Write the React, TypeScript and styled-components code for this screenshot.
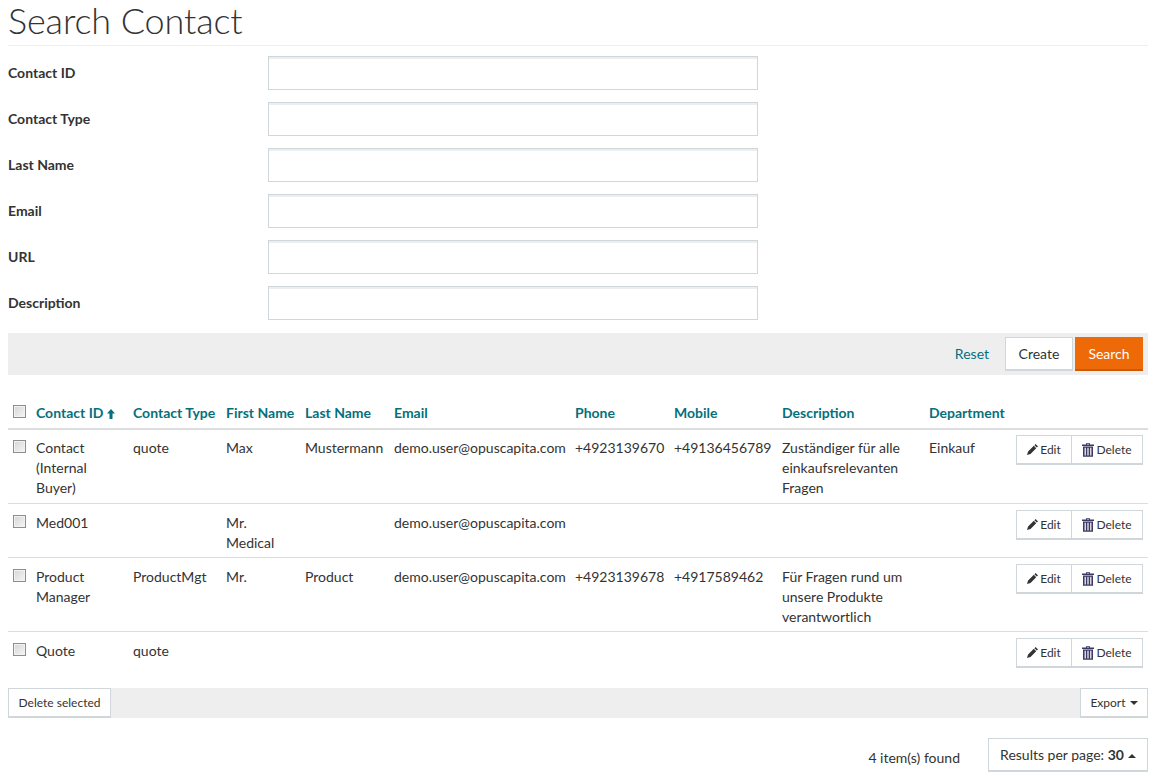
import styled, { createGlobalStyle } from "styled-components";

const GlobalStyle = createGlobalStyle`
  html, body {
    margin: 0;
    padding: 0;
    background: #fff;
  }
  body {
    font-family: "Lato", "Liberation Sans", sans-serif;
    font-size: 14px;
    line-height: 20px;
    color: #333;
  }
`;

const fields = ["Contact ID", "Contact Type", "Last Name", "Email", "URL", "Description"];

const columns = [
  { title: "Contact ID", width: 97 },
  { title: "Contact Type", width: 93 },
  { title: "First Name", width: 79 },
  { title: "Last Name", width: 89 },
  { title: "Email", width: 181 },
  { title: "Phone", width: 99 },
  { title: "Mobile", width: 108 },
  { title: "Description", width: 147 },
  { title: "Department", width: 82 },
];

const rows = [
  ["Contact (Internal Buyer)", "quote", "Max", "Mustermann", "demo.user@opuscapita.com", "+4923139670", "+49136456789", "Zuständiger für alle einkaufsrelevanten Fragen", "Einkauf"],
  ["Med001", "", "Mr. Medical", "", "demo.user@opuscapita.com", "", "", "", ""],
  ["Product Manager", "ProductMgt", "Mr.", "Product", "demo.user@opuscapita.com", "+4923139678", "+4917589462", "Für Fragen rund um unsere Produkte verantwortlich", ""],
  ["Quote", "quote", "", "", "", "", "", "", ""],
];

const PencilIcon = () => (
  <Glyph viewBox="0 0 11 11" width="11" height="11">
    <path d="M8.600 0L11 2.400 9.800 3.600 7.400 1.200zM6.800 1.800l2.400 2.400-5.700 5.700L0 11l1.100-3.500z" fill="#333" />
  </Glyph>
);

const TrashIcon = () => (
  <Glyph viewBox="0 0 12 14" width="12" height="14">
    <path
      d="M4 1.600V.2h4v1.400h4v1.300H0V1.600zM5 .9v.7h2V.900zM1 3.500h10V13.800H1zM2.600 4.800v7.700h1.200V4.800zM5.400 4.800v7.700h1.200V4.800zM8.200 4.800v7.700h1.200V4.800z"
      fill="#3b3a63"
      fillRule="evenodd"
    />
  </Glyph>
);

const SortArrow = () => (
  <Glyph viewBox="0 0 8 10" width="8" height="10">
    <path d="M4 0l4 4.600H5.500V10h-3V4.600H0z" fill="#05707d" />
  </Glyph>
);

export default function App() {
  return (
    <Page>
      <GlobalStyle />
      <Title>Search Contact</Title>
      <Form>
        {fields.map((field) => (
          <FieldRow key={field}>
            <FieldLabel>{field}</FieldLabel>
            <FieldInput type="text" />
          </FieldRow>
        ))}
      </Form>
      <SearchBar>
        <ResetLink>Reset</ResetLink>
        <Button>Create</Button>
        <PrimaryButton>Search</PrimaryButton>
      </SearchBar>
      <Table>
        <colgroup>
          <col style={{ width: 23 }} />
          {columns.map((col) => (
            <col key={col.title} style={{ width: col.width }} />
          ))}
          <col />
        </colgroup>
        <thead>
          <tr>
            <HeadCell>
              <Check type="checkbox" />
            </HeadCell>
            {columns.map((col, i) => (
              <HeadCell key={col.title}>
                {col.title}
                {i === 0 && <SortArrow />}
              </HeadCell>
            ))}
            <HeadCell />
          </tr>
        </thead>
        <tbody>
          {rows.map((row) => (
            <BodyRow key={row[0]}>
              <Cell>
                <Check type="checkbox" />
              </Cell>
              {row.map((value, i) => (
                <Cell key={i}>{value}</Cell>
              ))}
              <ActionCell>
                <ButtonGroup>
                  <GroupButton $width={56}>
                    <PencilIcon />
                    Edit
                  </GroupButton>
                  <GroupButton $width={72}>
                    <TrashIcon />
                    Delete
                  </GroupButton>
                </ButtonGroup>
              </ActionCell>
            </BodyRow>
          ))}
        </tbody>
      </Table>
      <TableFooter>
        <SmallButton $width={103}>Delete selected</SmallButton>
        <SmallButton $width={68}>
          Export<Caret />
        </SmallButton>
      </TableFooter>
      <ResultRow>
        <ItemCount>4 item(s) found</ItemCount>
        <PerPageButton>
          Results per page: <strong>30</strong>
          <CaretUp />
        </PerPageButton>
      </ResultRow>
    </Page>
  );
}

const Page = styled.div`
  box-sizing: border-box;
  width: 1156px;
  padding: 0 8px;
`;

const Title = styled.h1`
  margin: 0 0 10px;
  height: 45px;
  box-sizing: content-box;
  border-bottom: 1px solid #eee;
  font-size: 36px;
  font-weight: 300;
  line-height: 40px;
  letter-spacing: -0.12px;
  color: #333;
`;

const Form = styled.form`
  display: flex;
  flex-direction: column;
  gap: 12px;
  margin: 0;
`;

const FieldRow = styled.div`
  display: flex;
  align-items: center;
  height: 34px;
`;

const FieldLabel = styled.label`
  width: 260px;
  font-weight: 700;
  color: #333;
  margin-top: -1px;
`;

const FieldInput = styled.input`
  box-sizing: border-box;
  width: 490px;
  height: 34px;
  border: 1px solid #d0d7db;
  box-shadow: inset 0 2px 0 #eceff1;
  outline: none;
  background: #fff;
`;

const SearchBar = styled.div`
  display: flex;
  justify-content: flex-end;
  align-items: center;
  gap: 2px;
  box-sizing: border-box;
  height: 42px;
  margin-top: 13px;
  padding: 0 5px;
  background: #eee;
`;

const ResetLink = styled.a`
  margin-right: 14px;
  color: #05707d;
`;

const Button = styled.button`
  box-sizing: border-box;
  width: 68px;
  height: 34px;
  border: 1px solid #d0d7db;
  border-bottom-width: 2px;
  background: #fff;
  font: inherit;
  color: #333;
  padding: 0;
`;

const PrimaryButton = styled(Button)`
  border: none;
  border-bottom: 2px solid #cc5a06;
  background: #ee6907;
  color: #fff;
  padding-top: 2px;
`;

const Table = styled.table`
  width: 100%;
  table-layout: fixed;
  border-collapse: collapse;
  margin-top: 25px;
`;

const HeadCell = styled.th`
  padding: 3px 5px 5px;
  border-bottom: 2px solid #ddd;
  text-align: left;
  vertical-align: top;
  font-weight: 700;
  color: #05707d;
  white-space: nowrap;

  svg {
    margin-left: 4px;
    vertical-align: -1px;
  }
`;

const Cell = styled.td`
  padding: 9px 5px 4px;
  border-bottom: 1px solid #ddd;
  vertical-align: top;
  color: #333;
`;

const ActionCell = styled(Cell)`
  text-align: right;

  && {
    padding: 6px 5px 0 0;
  }
`;

const BodyRow = styled.tr`
  &:first-child ${Cell} {
    padding-top: 8px;
    padding-bottom: 5px;
  }

  &:first-child ${ActionCell} {
    padding-top: 5px;
    padding-bottom: 0;
  }

  &:last-child ${Cell} {
    border-bottom: none;
  }
`;

const Check = styled.input`
  appearance: none;
  display: block;
  box-sizing: border-box;
  width: 13px;
  height: 13px;
  margin: 2px 0 0;
  border: 1px solid #8e8e8e;
  background: linear-gradient(135deg, #d4d4d4, #f6f6f6);
  box-shadow: inset 0 0 0 1px #f2f2f2;
`;

const ButtonGroup = styled.div`
  display: inline-flex;
  vertical-align: top;
`;

const GroupButton = styled.button<{ $width: number }>`
  box-sizing: border-box;
  display: inline-flex;
  align-items: center;
  justify-content: center;
  gap: 2px;
  width: ${(p) => p.$width}px;
  height: 30px;
  padding: 0;
  margin-right: -1px;
  border: 1px solid #d0d7db;
  border-bottom-width: 2px;
  background: #fff;
  font: inherit;
  font-size: 12px;
  color: #333;

  &:last-child {
    margin-right: 0;
  }
`;

const Glyph = styled.svg`
  flex: none;
`;

const TableFooter = styled.div`
  display: flex;
  justify-content: space-between;
  height: 30px;
  margin-top: 20px;
  background: #eee;
`;

const SmallButton = styled.button<{ $width: number }>`
  box-sizing: border-box;
  width: ${(p) => p.$width}px;
  height: 30px;
  padding: 0;
  border: 1px solid #d0d7db;
  border-bottom-width: 2px;
  background: #fff;
  font: inherit;
  font-size: 12px;
  color: #333;
`;

const Caret = styled.span`
  display: inline-block;
  margin-left: 4px;
  vertical-align: middle;
  border-top: 4px solid #333;
  border-left: 4px solid transparent;
  border-right: 4px solid transparent;
`;

const CaretUp = styled(Caret)`
  border-top: none;
  border-bottom: 4px solid #333;
`;

const ResultRow = styled.div`
  display: flex;
  justify-content: flex-end;
  align-items: flex-end;
  gap: 28px;
  margin-top: 20px;
`;

const ItemCount = styled.span`
  margin-bottom: 4px;
`;

const PerPageButton = styled.button`
  box-sizing: border-box;
  width: 160px;
  height: 34px;
  padding: 0;
  border: 1px solid #d0d7db;
  border-bottom-width: 2px;
  background: #fff;
  font: inherit;
  color: #333;
`;
